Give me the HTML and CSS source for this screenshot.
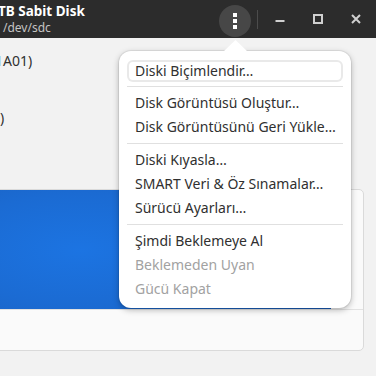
FILE: index.html
```html
<!DOCTYPE html>
<html lang="tr">
<head>
    <meta charset="UTF-8">
    <meta name="viewport" content="width=device-width, initial-scale=1.0">
    <title>Diskler</title>
    <link rel="stylesheet" href="styles.css">
</head>
<body>
    <header class="headerbar">
        <div class="title-box">
            <div class="title">TB Sabit Disk</div>
            <div class="subtitle">/dev/sdc</div>
        </div>
        <div class="header-buttons">
            <button class="menu-btn" aria-label="Menü">
                <span class="dot"></span>
                <span class="dot"></span>
                <span class="dot"></span>
            </button>
            <span class="vsep"></span>
            <button class="win-btn" aria-label="Küçült">
                <svg width="10" height="10" viewBox="0 0 10 10"><rect x="0.5" y="6" width="9" height="2" fill="#d0d0d0"/></svg>
            </button>
            <button class="win-btn" aria-label="Büyüt">
                <svg width="10" height="10" viewBox="0 0 10 10"><rect x="1" y="1" width="8" height="8" fill="none" stroke="#d0d0d0" stroke-width="2"/></svg>
            </button>
            <button class="win-btn" aria-label="Kapat">
                <svg width="10" height="10" viewBox="0 0 10 10"><path d="M1 1 L9 9 M9 1 L1 9" stroke="#d0d0d0" stroke-width="2" stroke-linecap="butt"/></svg>
            </button>
        </div>
    </header>

    <main class="content">
        <div class="info">
            <p class="info-line model">1A01)</p>
            <p class="info-line">)</p>
        </div>

        <div class="card">
            <div class="volume-bar"></div>
            <div class="card-foot"></div>
        </div>
    </main>

    <div class="popover">
        <ul class="menu">
            <li class="item focused">Diski Biçimlendir…</li>
            <li class="sep"></li>
            <li class="item">Disk Görüntüsü Oluştur…</li>
            <li class="item">Disk Görüntüsünü Geri Yükle…</li>
            <li class="sep"></li>
            <li class="item">Diski Kıyasla…</li>
            <li class="item">SMART Veri &amp; Öz Sınamalar…</li>
            <li class="item">Sürücü Ayarları…</li>
            <li class="sep"></li>
            <li class="item">Şimdi Beklemeye Al</li>
            <li class="item disabled">Beklemeden Uyan</li>
            <li class="item disabled">Gücü Kapat</li>
        </ul>
    </div>
</body>
</html>
```

FILE: styles.css
```css
:root {
    --header-bg: #2c2c2c;
    --window-bg: #f2f2f2;
    --card-bg: #fafafa;
    --border-color: #dadada;
    --text-color: #303030;
    --dim-color: #a2a2a2;
}

html, body {
    margin: 0;
    padding: 0;
    height: 100%;
    overflow: hidden;
}

body {
    font-family: 'Noto Sans', sans-serif;
    background: var(--window-bg);
    color: var(--text-color);
    display: flex;
    flex-direction: column;
    position: relative;
}

/* Header bar */
.headerbar {
    height: 38px;
    background: var(--header-bg);
    display: flex;
    align-items: center;
    flex-shrink: 0;
}

.title-box {
    margin-left: -2px;
    padding-bottom: 1px;
}

.title {
    color: #ffffff;
    font-weight: bold;
    font-size: 13.5px;
    line-height: 17px;
}

.subtitle {
    color: #c4c4c4;
    font-size: 12px;
    line-height: 15px;
    padding-left: 5px;
}

.header-buttons {
    margin-left: auto;
    padding-right: 8px;
    display: flex;
    align-items: center;
}

button {
    border: none;
    padding: 0;
    background: none;
    cursor: pointer;
}

.menu-btn {
    width: 32px;
    height: 32px;
    border-radius: 50%;
    background: #474747;
    display: flex;
    flex-direction: column;
    align-items: center;
    justify-content: center;
    gap: 2px;
    margin-top: 3px;
}

.dot {
    width: 4px;
    height: 4px;
    background: #ffffff;
}

.vsep {
    width: 1px;
    height: 19px;
    background: #4c4c4c;
    margin: 0 10px 0 6px;
}

.win-btn {
    width: 24px;
    height: 24px;
    display: flex;
    align-items: center;
    justify-content: center;
    margin-right: 14px;
}

.win-btn:last-child {
    margin-right: 0;
}

/* Content */
.content {
    flex: 1;
    padding-top: 13px;
}

.info {
    display: flex;
    flex-direction: column;
    gap: 37px;
}

.info-line {
    margin: 0;
    font-size: 14px;
    line-height: 20px;
}

.info-line.model {
    margin-left: -5px;
}

.card {
    margin: 61px 0 0 -10px;
    width: 372px;
    height: 160px;
    background: var(--card-bg);
    border: 1px solid var(--border-color);
    border-radius: 0 5px 5px 0;
    display: flex;
    flex-direction: column;
}

.volume-bar {
    height: 119px;
    width: 340px;
    background: radial-gradient(ellipse 260px 110px at 90px 60px, #1c74e2 0%, #1b6bd3 50%, #1a5fbc 100%);
}

.card-foot {
    flex: 1;
    border-top: 1px solid #e2e2e2;
}

/* Popover menu */
.popover {
    position: absolute;
    left: 119px;
    top: 51px;
    width: 232px;
    background: #ffffff;
    border-radius: 12px;
    box-shadow: 0 0 0 1px rgba(0, 0, 0, 0.06), 0 2px 6px rgba(0, 0, 0, 0.28);
}

.popover::before {
    content: "";
    position: absolute;
    left: 104px;
    top: -11px;
    width: 25px;
    height: 12px;
    background: #ffffff;
    clip-path: polygon(50% 0, 100% 100%, 0 100%);
}

.menu {
    list-style: none;
    margin: 0;
    padding: 8px 8px 7px;
}

.item {
    height: 24px;
    line-height: 24px;
    font-size: 14px;
    padding: 0 8px;
    white-space: nowrap;
}

.item.focused {
    height: 22px;
    line-height: 22px;
    margin: 1px 0;
    border-radius: 6px;
    box-shadow: inset 0 0 0 2px #e9e9e9;
}

.item.disabled {
    color: var(--dim-color);
}

.sep {
    height: 1px;
    background: #e0e0e0;
    margin: 4px 0;
}
```
